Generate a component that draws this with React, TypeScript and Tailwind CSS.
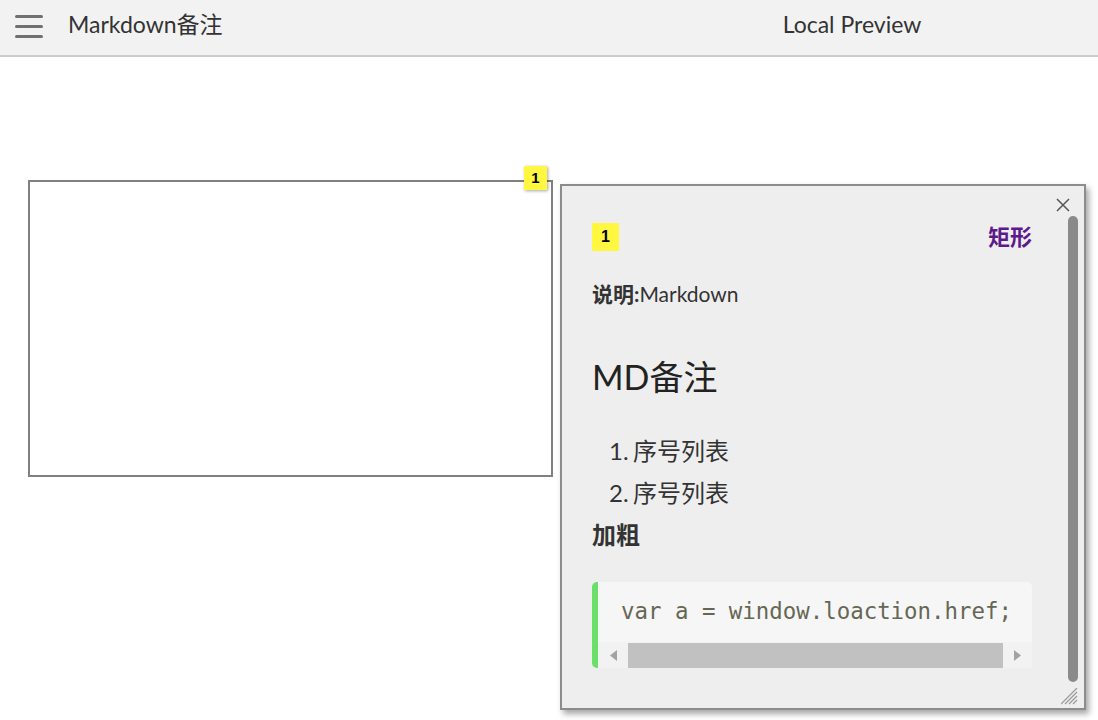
import React from "react";

const sans = { fontFamily: '"Lato", "Noto Sans CJK SC", sans-serif' };

export default function App() {
  return (
    <div className="w-[1098px] h-[720px] bg-white overflow-hidden flex flex-col" style={sans}>
      <header className="h-[57px] shrink-0 bg-[#f2f2f2] border-b-2 border-[#cccccc] flex items-center">
        <div className="w-[68px] flex pl-[15px]">
          <div className="flex flex-col gap-[7px] w-[28px] -mt-[2px]">
            <span className="block h-[3px] rounded-full bg-[#707070]" />
            <span className="block h-[3px] rounded-full bg-[#707070]" />
            <span className="block h-[3px] rounded-full bg-[#707070]" />
          </div>
        </div>
        <div className="w-[538px] text-[23px] leading-[30px] text-[#333] -mt-[7px]">Markdown备注</div>
        <div className="flex-1 text-center text-[23px] leading-[30px] text-[#333] -mt-[7px]">Local Preview</div>
      </header>
      <main className="relative flex-1">
        <div className="absolute left-[28px] top-[123px] w-[525px] h-[297px] border-2 border-[#808080]" />
        <div className="absolute left-[524px] top-[109px] w-[23px] h-[24px] bg-[#fff740] shadow-[1px_1px_3px_rgba(0,0,0,0.35)] flex items-center justify-center text-[15px] font-bold text-black" style={{ fontFamily: '"Liberation Sans", sans-serif' }}>
          1
        </div>
        <div className="absolute left-[560px] top-[127px] w-[526px] h-[526px] border-2 border-[#8c8c8c] bg-[#eeeeee] shadow-[3px_4px_6px_rgba(0,0,0,0.35)]">
          <svg className="absolute right-[14px] top-[12px]" width="14" height="14" viewBox="0 0 14 14">
            <path d="M1 1L13 13M13 1L1 13" stroke="#555" strokeWidth="1.5" />
          </svg>
          <div className="absolute right-[6px] top-[30px] w-[10px] h-[466px] rounded-full bg-[#8a8a8a]" />
          <svg className="absolute right-[6px] bottom-[3px]" width="17" height="17" viewBox="0 0 17 17">
            <path d="M16 4L4 16M16 8L8 16M16 12L12 16M16 0L0 16" stroke="#999" strokeWidth="1.2" />
          </svg>
          <div className="pl-[30px] pr-[52px] pt-[37px] flex flex-col">
            <div className="flex items-center justify-between h-[28px]">
              <div className="w-[27px] h-[28px] bg-[#fff740] flex items-center justify-center text-[16px] font-bold text-black" style={{ fontFamily: '"Liberation Sans", sans-serif' }}>
                1
              </div>
              <div className="text-[22px] leading-[28px] font-bold text-[#5c1a8c]">矩形</div>
            </div>
            <div className="mt-[29px] text-[21px] leading-[28px] text-[#333]">
              <b>说明:</b>Markdown
            </div>
            <div className="mt-[49px] text-[34px] leading-[40px] text-[#222]">MD备注</div>
            <div className="mt-[33px] text-[24px] leading-[42px] text-[#333]">
              <div className="flex pl-[17px]"><span className="w-[24px]">1.</span>序号列表</div>
              <div className="flex pl-[17px]"><span className="w-[24px]">2.</span>序号列表</div>
              <div className="font-bold">加粗</div>
            </div>
            <div className="mt-[26px] border-l-[6px] border-[#6ae06a] rounded-l-[5px] flex flex-col">
              <div className="h-[60px] bg-[#f6f6f6] rounded-tr-[5px] pl-[23px] flex items-center text-[22.4px] text-[#666655] whitespace-pre" style={{ fontFamily: '"DejaVu Sans Mono", monospace' }}>
                var a = window.loaction.href;
              </div>
              <div className="h-[26px] bg-[#f2f2f2] flex items-center">
                <div className="w-[30px] flex justify-center">
                  <svg width="7" height="11" viewBox="0 0 7 11"><path d="M7 0L0 5.5L7 11Z" fill="#a3a3a3" /></svg>
                </div>
                <div className="w-[375px] h-[25px] bg-[#c1c1c1]" />
                <div className="flex-1 flex justify-center">
                  <svg width="7" height="11" viewBox="0 0 7 11"><path d="M0 0L7 5.5L0 11Z" fill="#a3a3a3" /></svg>
                </div>
              </div>
            </div>
          </div>
        </div>
      </main>
    </div>
  );
}
